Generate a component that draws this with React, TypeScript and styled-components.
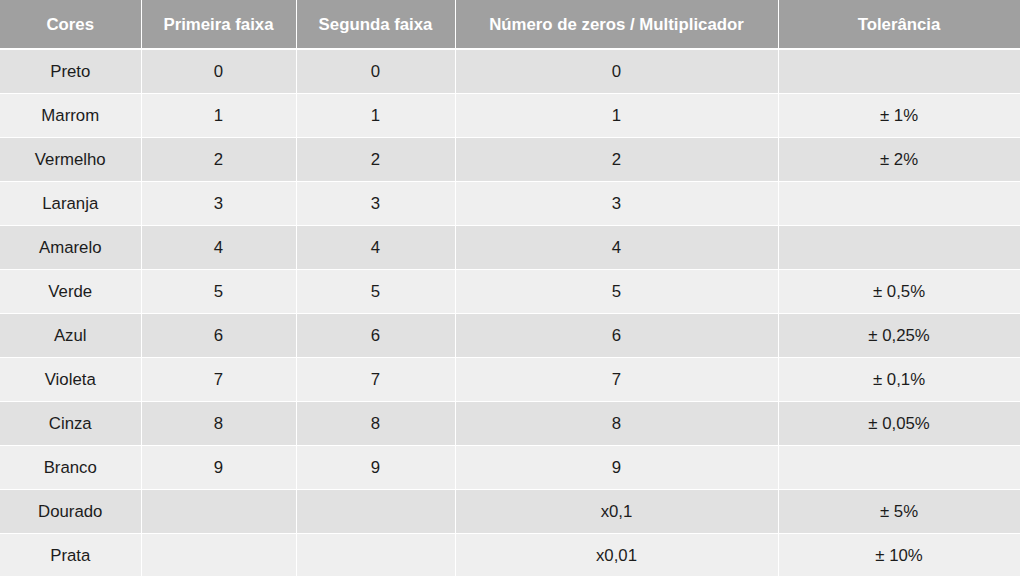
import React from 'react'
import styled, { createGlobalStyle } from 'styled-components'

const GlobalStyle = createGlobalStyle`
  html, body {
    margin: 0;
    padding: 0;
    background: #ffffff;
  }
  body {
    font-family: "Liberation Sans", Arial, sans-serif;
  }
`

type Linha = {
  cor: string
  primeira: string
  segunda: string
  multiplicador: string
  tolerancia: string
}

const linhas: Linha[] = [
  { cor: 'Preto', primeira: '0', segunda: '0', multiplicador: '0', tolerancia: '' },
  { cor: 'Marrom', primeira: '1', segunda: '1', multiplicador: '1', tolerancia: '± 1%' },
  { cor: 'Vermelho', primeira: '2', segunda: '2', multiplicador: '2', tolerancia: '± 2%' },
  { cor: 'Laranja', primeira: '3', segunda: '3', multiplicador: '3', tolerancia: '' },
  { cor: 'Amarelo', primeira: '4', segunda: '4', multiplicador: '4', tolerancia: '' },
  { cor: 'Verde', primeira: '5', segunda: '5', multiplicador: '5', tolerancia: '± 0,5%' },
  { cor: 'Azul', primeira: '6', segunda: '6', multiplicador: '6', tolerancia: '± 0,25%' },
  { cor: 'Violeta', primeira: '7', segunda: '7', multiplicador: '7', tolerancia: '± 0,1%' },
  { cor: 'Cinza', primeira: '8', segunda: '8', multiplicador: '8', tolerancia: '± 0,05%' },
  { cor: 'Branco', primeira: '9', segunda: '9', multiplicador: '9', tolerancia: '' },
  { cor: 'Dourado', primeira: '', segunda: '', multiplicador: 'x0,1', tolerancia: '± 5%' },
  { cor: 'Prata', primeira: '', segunda: '', multiplicador: 'x0,01', tolerancia: '± 10%' },
]

const colunas = [141, 155, 159, 323, 242]

const App = () => {
  return (
    <Wrapper>
      <GlobalStyle />
      <Table>
        <colgroup>
          {colunas.map((w, i) => (
            <col key={i} style={{ width: w }} />
          ))}
        </colgroup>
        <thead>
          <tr>
            <HeadCell>Cores</HeadCell>
            <HeadCell>Primeira faixa</HeadCell>
            <HeadCell>Segunda faixa</HeadCell>
            <HeadCell>Número de zeros / Multiplicador</HeadCell>
            <HeadCell>Tolerância</HeadCell>
          </tr>
        </thead>
        <tbody>
          {linhas.map((l, i) => (
            <Row key={l.cor} $dark={i % 2 === 0}>
              <Cell>{l.cor}</Cell>
              <Cell>{l.primeira}</Cell>
              <Cell>{l.segunda}</Cell>
              <Cell>{l.multiplicador}</Cell>
              <Cell>{l.tolerancia}</Cell>
            </Row>
          ))}
        </tbody>
      </Table>
    </Wrapper>
  )
}

const Wrapper = styled.main`
  width: 1024px;
  height: 576px;
  overflow: hidden;
  background: #ffffff;
`

const Table = styled.table`
  width: 1020px;
  table-layout: fixed;
  border-collapse: collapse;
  font-size: 16.8px;
  color: #1c1c1c;

  thead tr {
    border-bottom: 2px solid #ffffff;
  }
`

const HeadCell = styled.th`
  height: 46px;
  padding: 2px 0 0;
  background: #a0a0a0;
  color: #ffffff;
  font-weight: bold;
  text-align: center;
  vertical-align: middle;
  border-right: 1px solid #ffffff;
`

const Row = styled.tr<{ $dark: boolean }>`
  background: ${({ $dark }) => ($dark ? '#e1e1e1' : '#efefef')};
  border-bottom: 1px solid #ffffff;
`

const Cell = styled.td`
  height: 43px;
  padding: 0;
  text-align: center;
  vertical-align: middle;
  border-right: 1px solid #ffffff;
`

export default App
